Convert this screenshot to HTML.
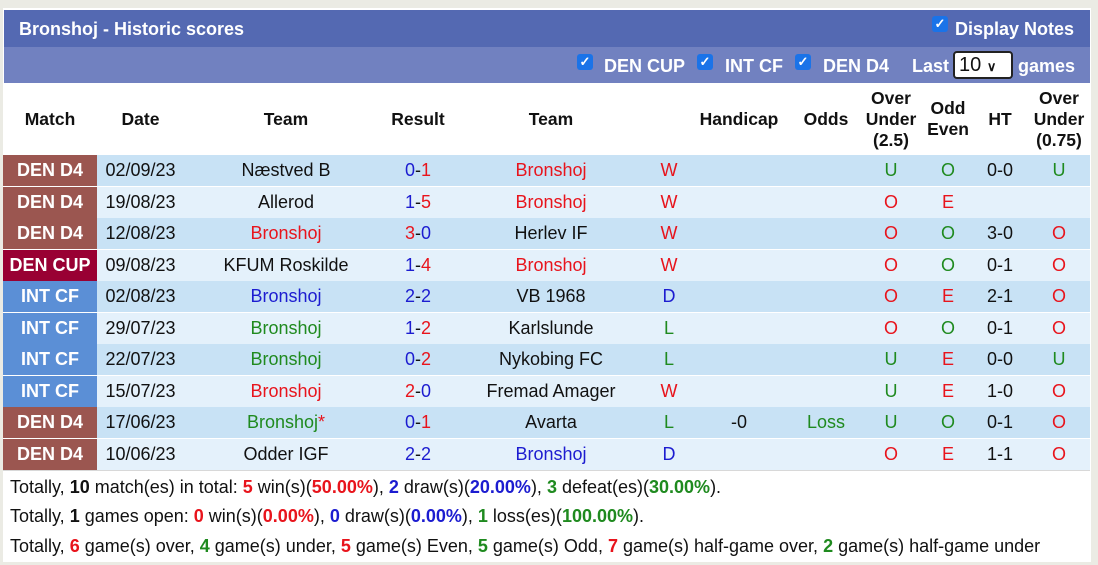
<!DOCTYPE html>
<html><head><meta charset="utf-8"><style>
body{margin:0;width:1098px;height:565px;background:#ebebe4;font-family:"Liberation Sans",Arial,sans-serif;position:relative;overflow:hidden}
.panel{position:absolute;left:3px;top:8px;width:1088px;height:554px;background:#fff}
.t1{position:absolute;left:4px;top:10px;width:1086px;height:37px;background:#5469b2;color:#fff;font-weight:bold;font-size:18px}
.t2{position:absolute;left:4px;top:47px;width:1086px;height:36px;background:#7181c0;color:#fff;font-weight:bold;font-size:18px}
.cb{position:absolute;width:16px;height:16px;background:#1a73e8;border-radius:3px;color:#fff;font-size:13px;line-height:16px;text-align:center}
.abs{position:absolute;white-space:nowrap}
.hd{position:absolute;font-weight:bold;font-size:17.5px;text-align:center;line-height:21px;color:#111}
.row{position:absolute;left:3px;width:1087px;height:31px;font-size:18px;line-height:31px}
.row div{position:absolute;top:0;height:31px;text-align:center;white-space:nowrap}
.m{left:0;width:94px;color:#fff;font-weight:bold;font-size:18px}
.d4{background:#9b5650}.cup{background:#990033}.int{background:#5b8fd6}
.r{color:#e8141c}.b{color:#1c1cd0}.g{color:#1f8a1f}.k{color:#111}
.sum{position:absolute;left:10px;font-size:18px;color:#111;white-space:nowrap}
.sum b{font-weight:bold}
</style></head><body>
<div class="panel"></div>
<div class="t1"><span class="abs" style="left:15px;top:9px">Bronshoj - Historic scores</span><span class="cb" style="left:928px;top:6px">✓</span><span class="abs" style="left:951px;top:9px">Display Notes</span></div>
<div class="t2">
<span class="cb" style="left:573px;top:7px">✓</span><span class="abs" style="left:600px;top:9px">DEN CUP</span>
<span class="cb" style="left:693px;top:7px">✓</span><span class="abs" style="left:721px;top:9px">INT CF</span>
<span class="cb" style="left:791px;top:7px">✓</span><span class="abs" style="left:819px;top:9px">DEN D4</span>
<span class="abs" style="left:908px;top:9px">Last</span>
<span class="abs" style="left:949px;top:4px;width:60px;height:28px;background:#fff;border:2px solid #222;border-radius:4px;color:#111;font-weight:normal;font-size:20px;line-height:24px;box-sizing:border-box;padding-left:4px">10 <span style="font-size:13px;font-weight:bold">&#x2228;</span></span>
<span class="abs" style="left:1014px;top:9px">games</span></div>

<div class="hd" style="left:3px;width:94px;top:109px">Match</div>
<div class="hd" style="left:97px;width:87px;top:109px">Date</div>
<div class="hd" style="left:184px;width:204px;top:109px">Team</div>
<div class="hd" style="left:388px;width:60px;top:109px">Result</div>
<div class="hd" style="left:448px;width:206px;top:109px">Team</div>
<div class="hd" style="left:684px;width:110px;top:109px">Handicap</div>
<div class="hd" style="left:794px;width:64px;top:109px">Odds</div>
<div class="hd" style="left:858px;width:66px;top:88px;line-height:21px">Over<br>Under<br>(2.5)</div>
<div class="hd" style="left:924px;width:48px;top:98px">Odd<br>Even</div>
<div class="hd" style="left:972px;width:56px;top:109px">HT</div>
<div class="hd" style="left:1028px;width:62px;top:88px">Over<br>Under<br>(0.75)</div>

<div id="rows"></div>
<script>
var rows=[
["d4","DEN D4","02/09/23","k","Næstved B","b0","r1","r","Bronshoj","r","W","","","g","U","g","O","0-0","g","U"],
["d4","DEN D4","19/08/23","k","Allerod","b1","r5","r","Bronshoj","r","W","","","r","O","r","E","","",""],
["d4","DEN D4","12/08/23","r","Bronshoj","r3","b0","k","Herlev IF","r","W","","","r","O","g","O","3-0","r","O"],
["cup","DEN CUP","09/08/23","k","KFUM Roskilde","b1","r4","r","Bronshoj","r","W","","","r","O","g","O","0-1","r","O"],
["int","INT CF","02/08/23","b","Bronshoj","b2","b2","k","VB 1968","b","D","","","r","O","r","E","2-1","r","O"],
["int","INT CF","29/07/23","g","Bronshoj","b1","r2","k","Karlslunde","g","L","","","r","O","g","O","0-1","r","O"],
["int","INT CF","22/07/23","g","Bronshoj","b0","r2","k","Nykobing FC","g","L","","","g","U","r","E","0-0","g","U"],
["int","INT CF","15/07/23","r","Bronshoj","r2","b0","k","Fremad Amager","r","W","","","g","U","r","E","1-0","r","O"],
["d4","DEN D4","17/06/23","g","Bronshoj<span class='r'>*</span>","b0","r1","k","Avarta","g","L","-0","Loss","g","U","g","O","0-1","r","O"],
["d4","DEN D4","10/06/23","k","Odder IGF","b2","b2","b","Bronshoj","b","D","","","r","O","r","E","1-1","r","O"]];
var h="";
rows.forEach(function(r,i){
var bg=i%2?"#e4f1fb":"#c8e2f5";
var c=function(s){return '<span class="'+(s[0]=="r"?"r":"b")+'">'+s.slice(1)+'</span>'};
h+='<div class="row" style="top:'+(155+i*31.5)+'px;background:'+bg+'">'+
'<div class="m '+r[0]+'">'+r[1]+'</div>'+
'<div class="k" style="left:94px;width:87px">'+r[2]+'</div>'+
'<div class="'+r[3]+'" style="left:181px;width:204px">'+r[4]+'</div>'+
'<div style="left:385px;width:60px">'+c(r[5])+'<span class="k">-</span>'+c(r[6])+'</div>'+
'<div class="'+r[7]+'" style="left:445px;width:206px">'+r[8]+'</div>'+
'<div class="'+r[9]+'" style="left:651px;width:30px">'+r[10]+'</div>'+
'<div class="k" style="left:681px;width:110px">'+r[11]+'</div>'+
'<div class="g" style="left:791px;width:64px">'+r[12]+'</div>'+
'<div class="'+r[13]+'" style="left:855px;width:66px">'+r[14]+'</div>'+
'<div class="'+r[15]+'" style="left:921px;width:48px">'+r[16]+'</div>'+
'<div class="k" style="left:969px;width:56px">'+r[17]+'</div>'+
'<div class="'+r[18]+'" style="left:1025px;width:62px">'+r[19]+'</div></div>';
});
document.getElementById("rows").innerHTML=h;
</script>
<div style="position:absolute;left:3px;top:470px;width:1087px;height:1px;background:#d8d8d8"></div>
<div class="sum" style="top:477px">Totally, <b>10</b> match(es) in total: <b class="r">5</b> win(s)(<b class="r">50.00%</b>), <b class="b">2</b> draw(s)(<b class="b">20.00%</b>), <b class="g">3</b> defeat(es)(<b class="g">30.00%</b>).</div>
<div class="sum" style="top:506px">Totally, <b>1</b> games open: <b class="r">0</b> win(s)(<b class="r">0.00%</b>), <b class="b">0</b> draw(s)(<b class="b">0.00%</b>), <b class="g">1</b> loss(es)(<b class="g">100.00%</b>).</div>
<div class="sum" style="top:536px">Totally, <b class="r">6</b> game(s) over, <b class="g">4</b> game(s) under, <b class="r">5</b> game(s) Even, <b class="g">5</b> game(s) Odd, <b class="r">7</b> game(s) half-game over, <b class="g">2</b> game(s) half-game under</div>
</body></html>
